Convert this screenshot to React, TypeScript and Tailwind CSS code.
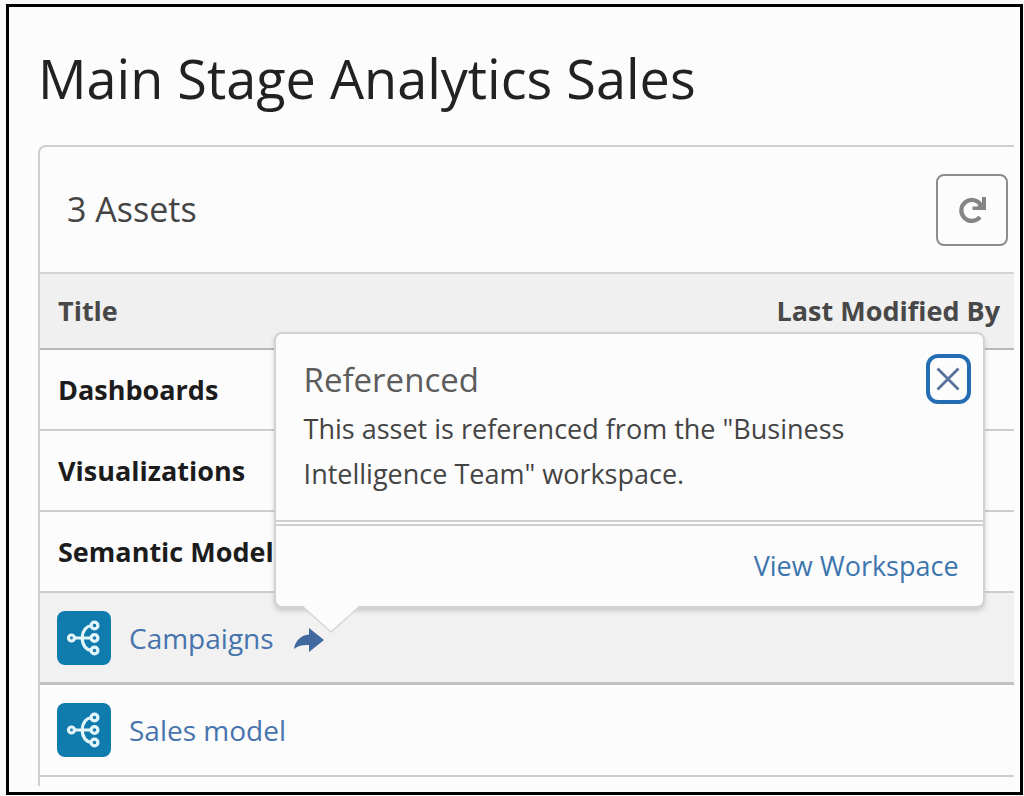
import React from "react";

function ModelIcon() {
  return (
    <svg
      viewBox="0 0 54 54"
      aria-hidden="true"
      className="size-[54px] shrink-0 rounded-lg bg-[#107cad]"
      fill="none"
      stroke="#e4f5fa"
      strokeWidth="3.200"
    >
      <path d="M18 27h17M34.500 14.500C27.500 15.500 25.500 21 25 27c.5 6 2.500 11.500 9.500 12.500" />
      <circle cx="14.500" cy="27" r="3" />
      <circle cx="37.500" cy="14.500" r="3.400" />
      <circle cx="37.500" cy="27" r="3.400" />
      <circle cx="37.500" cy="39.500" r="3.400" />
    </svg>
  );
}

function ShareArrow() {
  return (
    <svg viewBox="0 0 30 24" aria-hidden="true" className="h-6 w-[30px]" fill="#40699f">
      <path d="M15 0 30 12 15 24V17C8 16.500 4 18 0 21 1 13 7 7 15 6.500Z" />
    </svg>
  );
}

function RefreshIcon() {
  return (
    <svg viewBox="0 0 32 32" aria-hidden="true" className="size-8" fill="none" stroke="#858585" strokeWidth="4.200">
      <path d="M24 23A10.500 10.500 0 1 1 24.500 10.500" />
      <path d="M26 3H30V16H16.500V12.500H21L26 8.500Z" fill="#858585" stroke="none" />
    </svg>
  );
}

function ReferencedPopover() {
  return (
    <div
      role="dialog"
      aria-labelledby="referenced-title"
      className="absolute bottom-full -left-5 z-10 mb-4 w-[711px] rounded-lg border-2 border-[#d2d2d2] bg-[#fcfcfc] text-left shadow-[0_3px_5px_rgba(0,0,0,0.16)]"
    >
      <div className="flex items-start justify-between pt-5 pr-3 pb-6 pl-7">
        <div>
          <h2 id="referenced-title" className="text-[33px] leading-[52px] text-[#5c5c5c]">
            Referenced
          </h2>
          <p className="w-[570px] text-[27px] leading-[45px] text-[#444]">
            This asset is referenced from the "Business Intelligence Team" workspace.
          </p>
        </div>
        <button
          type="button"
          aria-label="Close"
          className="flex h-[50px] w-[45px] items-center justify-center rounded-xl border-4 border-[#246db3]"
        >
          <svg viewBox="0 0 24 24" aria-hidden="true" className="size-6" stroke="#5a719c" strokeWidth="2.800">
            <path d="M1.500 1.500 22.500 22.500M22.500 1.500 1.500 22.500" />
          </svg>
        </button>
      </div>
      <div className="flex h-[86px] items-center justify-end border-t-[6px] border-double border-[#cfcfcf] pr-6">
        <a href="#workspace" className="text-[27px] leading-9 text-[#3d75ad]">
          View Workspace
        </a>
      </div>
      <svg viewBox="0 0 56 28" aria-hidden="true" className="absolute top-full left-[27px] h-7 w-14">
        <path d="M0 0H56L28 26Z" fill="#fcfcfc" />
        <path d="M0 1 28 26 56 1" fill="none" stroke="#d6d6d6" strokeWidth="1.500" />
      </svg>
    </div>
  );
}

function GroupRow({ name }: { name: string }) {
  return (
    <tr>
      <th
        scope="rowgroup"
        colSpan={2}
        className="h-[81px] border-b-2 border-[#cdcdcd] px-[18px] text-left font-bold text-[#1c1c1c]"
      >
        {name}
      </th>
    </tr>
  );
}

export default function App() {
  return (
    <div className="min-h-screen bg-[#f9f9f9] pt-1 pr-px pb-px pl-1.5 font-['Open_Sans','Noto_Sans',sans-serif]">
      <main className="border-[3px] border-black bg-[#fcfcfc] pt-9 pr-1.5 pb-1.5 pl-[29px]">
        <h1 className="pb-8 text-[54px] leading-[70px] text-[#222]">Main Stage Analytics Sales</h1>
        <section className="rounded-tl-lg border-t-2 border-l-2 border-[#cfcfcf] pb-[9px]">
          <div className="flex h-[127px] items-center justify-between border-b-2 border-[#d4d4d4] pr-1.5 pl-[27px]">
            <h2 className="text-[34px] text-[#444]">3 Assets</h2>
            <button
              type="button"
              aria-label="Refresh"
              className="flex size-[72px] items-center justify-center rounded-lg border-2 border-[#8c8c8c]"
            >
              <RefreshIcon />
            </button>
          </div>
          <table className="w-full border-separate border-spacing-0 text-[27px] leading-9">
            <thead>
              <tr className="bg-[#f0f0f0] text-[#484848]">
                <th scope="col" className="h-[76px] border-b-2 border-[#b8b8b8] px-[18px] text-left font-bold">
                  Title
                </th>
                <th scope="col" className="border-b-2 border-[#b8b8b8] pr-3.5 text-right font-bold">
                  Last Modified By
                </th>
              </tr>
            </thead>
            <tbody>
              <GroupRow name="Dashboards" />
              <GroupRow name="Visualizations" />
              <GroupRow name="Semantic Model" />
              <tr className="bg-[#f1f1f1]">
                <td colSpan={2} className="h-[92px] border-b-[3px] border-[#c2c2c2] px-[17px]">
                  <div className="flex items-center">
                    <ModelIcon />
                    <a href="#campaigns" className="ml-[18px] text-[28px] text-[#4774ad]">
                      Campaigns
                    </a>
                    <div className="relative ml-5 flex pt-1">
                      <button type="button" aria-label="Referenced asset">
                        <ShareArrow />
                      </button>
                      <ReferencedPopover />
                    </div>
                  </div>
                </td>
              </tr>
              <tr>
                <td colSpan={2} className="h-[92px] border-b-2 border-[#cdcdcd] px-[17px]">
                  <div className="flex items-center">
                    <ModelIcon />
                    <a href="#sales-model" className="ml-[18px] text-[28px] text-[#4774ad]">
                      Sales model
                    </a>
                  </div>
                </td>
              </tr>
            </tbody>
          </table>
        </section>
      </main>
    </div>
  );
}
